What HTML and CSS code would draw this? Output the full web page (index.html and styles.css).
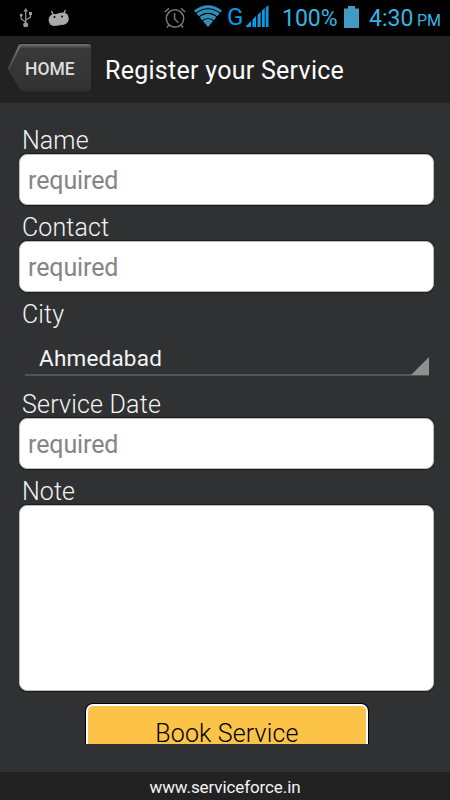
FILE: index.html
```html
<!DOCTYPE html>
<html lang="en">
<head>
    <meta charset="UTF-8">
    <meta name="viewport" content="width=device-width, initial-scale=1.0">
    <title>Register your Service</title>
    <link rel="stylesheet" href="styles.css">
</head>

<body>
    <!-- Status bar -->
    <div class="status-bar">
        <svg class="usb" width="14" height="20" viewBox="0 0 14 20" fill="none" stroke="#999" stroke-width="1.2">
            <path d="M6.700 3v13M6.700 14L2.200 11V7M6.700 12l4.800-2.600V6" />
            <path d="M6.700 0l2.200 3.600H4.500zM10 4h3v3h-3z" fill="#999" stroke="none" />
            <circle cx="2.200" cy="7" r="1.500" fill="#999" stroke="none" />
            <circle cx="6.700" cy="16.800" r="2.500" fill="#999" stroke="none" />
        </svg>
        <svg class="droid" width="22" height="17" viewBox="0 0 22 17">
            <path d="M3.500 1l1.800 4M17.500 0l-2 4" stroke="#aaa" stroke-width="1.3" />
            <ellipse cx="6" cy="10" rx="5.400" ry="6" fill="#aaa" />
            <ellipse cx="15" cy="8.700" rx="5.800" ry="6.200" fill="#aaa" />
            <path d="M5 6q6-4 10-3v11q-5 3-10 1z" fill="#aaa" />
            <circle cx="6.500" cy="7" r="1" />
            <circle cx="14" cy="6.500" r="1" />
        </svg>
        <svg class="alarm" width="22" height="22" viewBox="0 0 22 22" fill="none" stroke="#777" stroke-width="1.5">
            <circle cx="11" cy="11.500" r="8.700" />
            <path d="M10.600 6v6l3.800 3.800M.8 5L5 1.200M17 1.200L21.200 5M5 18l-2 2.500M17 18l2 2.500" />
        </svg>
        <svg class="wifi" width="28" height="23" viewBox="0 0 28 23">
            <path d="M0 5.500Q14-5 28 5.500L14 22z" fill="#2e8fb8" />
            <path d="M1.500 8.500Q14-1 26.500 8.500M4.500 12.300Q14 4.500 23.500 12.300M8 16Q14 11 20 16" fill="none" stroke="#000" stroke-width="1.100" />
        </svg>
        <span class="network">G</span>
        <svg class="signal" width="23" height="22" viewBox="0 0 23 22" fill="#0a9be6">
            <path d="M0 22v-1l5-5v6zM6.500 22v-7.500l3.500-3.500v11zM11.500 22V10L14.700 6.500V22zM16 22V5.700L18.800 3v19zM19.800 22V2.500L22.500 0v22z" />
        </svg>
        <span class="percent">100%</span>
        <svg class="battery" width="15" height="22" viewBox="0 0 15 22">
            <path d="M4 0h7v2.500h4V22H0V2.500h4z" fill="#419bc3" />
        </svg>
        <span class="clock">4:30</span>
        <span class="ampm">PM</span>
    </div>

    <!-- Title bar -->
    <div class="header">
        <div class="home-btn">
            <svg width="86" height="52" viewBox="0 0 86 52">
                <defs>
                    <linearGradient id="edge" x1="0" y1="0" x2="0" y2="1">
                        <stop offset="0" stop-color="#777" />
                        <stop offset=".09" stop-color="#393939" />
                        <stop offset=".9" stop-color="#333" />
                        <stop offset="1" stop-color="#292929" />
                    </linearGradient>
                    <linearGradient id="side" x1="0" y1="0" x2="0" y2="1">
                        <stop offset="0" stop-color="#777" />
                        <stop offset="1" stop-color="#444" />
                    </linearGradient>
                </defs>
                <path d="M14 1h67q3 0 3 3v41q0 4-4 4H17q-3 0-5-4L1 26 12 3q1-2 2-2z" fill="url(#edge)" />
                <path d="M13 2L1.500 26" stroke="url(#side)" stroke-width="2" />
                <path d="M13 .5h69" stroke="#111" />
            </svg>
            <span>HOME</span>
        </div>
        <h1>Register your Service</h1>
    </div>

    <!-- Service form -->
    <form class="service-form">
        <label for="name">Name</label>
        <input type="text" id="name" placeholder="required">

        <label for="contact">Contact</label>
        <input type="text" id="contact" placeholder="required">

        <label>City</label>
        <div class="spinner">
            <span>Ahmedabad</span>
            <svg width="18" height="18" viewBox="0 0 18 18"><path d="M18 0v18H0z" fill="#8e8f8f" /></svg>
        </div>

        <label class="date-label" for="date">Service Date</label>
        <input type="text" id="date" placeholder="required">

        <label for="note">Note</label>
        <textarea id="note"></textarea>

        <button type="button">Book Service</button>
    </form>

    <div class="footer">www.serviceforce.in</div>
</body>
</html>
```
FILE: styles.css
```css
* {
    box-sizing: border-box;
}

body {
    margin: 0;
    width: 450px;
    height: 800px;
    display: flex;
    flex-direction: column;
    overflow: hidden;
    background: #303133;
    color: #f4f4f4;
    font-family: Roboto, "Liberation Sans", sans-serif;
}

/* Status bar */
.status-bar {
    height: 36px;
    flex: none;
    display: flex;
    align-items: flex-start;
    background: #000;
    color: #33b5e5;
    padding-left: 19px;
    white-space: nowrap;
}

.status-bar svg,
.status-bar span {
    flex: none;
}

.usb {
    margin-top: 8px;
}

.droid {
    margin: 10px 0 0 15px;
}

.alarm {
    margin: 7px 0 0 94px;
}

.wifi {
    margin: 5px 0 0 8px;
}

.network {
    width: 20px;
    margin: 3px 0 0 5px;
    font-size: 24px;
    line-height: 28px;
    color: #0a9be6;
}

.signal {
    margin: 5px 0 0 -1px;
}

.percent {
    width: 56px;
    margin: 5px 0 0 13px;
    font-size: 23px;
    line-height: 28px;
}

.battery {
    margin: 6px 0 0 6px;
}

.clock {
    width: 45px;
    margin: 5px 0 0 10px;
    font-size: 23px;
    line-height: 28px;
}

.ampm {
    margin: 12px 0 0 3px;
    font-size: 16px;
    line-height: 18px;
}

/* Title bar */
.header {
    height: 67px;
    flex: none;
    display: flex;
    align-items: flex-start;
    background: #222;
}

.home-btn {
    display: grid;
    margin: 7px 0 0 7px;
}

.home-btn svg,
.home-btn span {
    grid-area: 1 / 1;
}

.home-btn span {
    padding-left: 18px;
    font-size: 17.5px;
    font-weight: 500;
    line-height: 53px;
    color: #ddd;
}

h1 {
    margin: 19px 0 0 12px;
    font-size: 25px;
    font-weight: 400;
    line-height: 32px;
    letter-spacing: 0.27px;
    white-space: nowrap;
    color: #fff;
}

/* Form, cut off above the footer */
.service-form {
    height: 626px;
    flex: none;
    margin: 15px 16px 28px 19px;
    overflow: hidden;
}

label {
    display: block;
    height: 36px;
    padding: 9px 0 0 3px;
    font-size: 25px;
    font-weight: 300;
    line-height: 27px;
    letter-spacing: 0.1px;
}

.date-label {
    letter-spacing: 0.2px;
}

input,
textarea {
    display: block;
    width: 415px;
    height: 51px;
    margin: 0;
    padding: 1px 8px 0;
    border: 1px solid #bbb;
    border-radius: 8px;
    outline: none;
    background: #fff;
    box-shadow: 0 0 1px 1px #1b1c1d;
    font-family: inherit;
    font-size: 25px;
    letter-spacing: -0.1px;
    resize: none;
}

input::placeholder {
    color: #858585;
    opacity: 1;
}

textarea {
    height: 186px;
}

.spinner {
    height: 48px;
    margin: 0 5px 6px 6px;
    border-bottom: 2px solid #535455;
    display: flex;
    justify-content: space-between;
    align-items: flex-end;
    padding-left: 14px;
    font-size: 22.5px;
    line-height: 32px;
    letter-spacing: 0.2px;
}

.spinner svg {
    margin-bottom: -1px;
}

button {
    display: block;
    width: 282px;
    height: 58px;
    margin: 13px 0 0 67px;
    padding: 0;
    border: 2px solid #fff;
    border-radius: 7px;
    background: #fdc349;
    box-shadow: 0 0 0 1px #000;
    font-family: inherit;
    font-size: 25px;
    font-weight: 300;
    letter-spacing: 0.15px;
    color: #000;
}

/* Footer */
.footer {
    height: 28px;
    flex: none;
    background: #222;
    text-align: center;
    font-size: 17px;
    line-height: 31px;
    letter-spacing: -0.1px;
}
```
